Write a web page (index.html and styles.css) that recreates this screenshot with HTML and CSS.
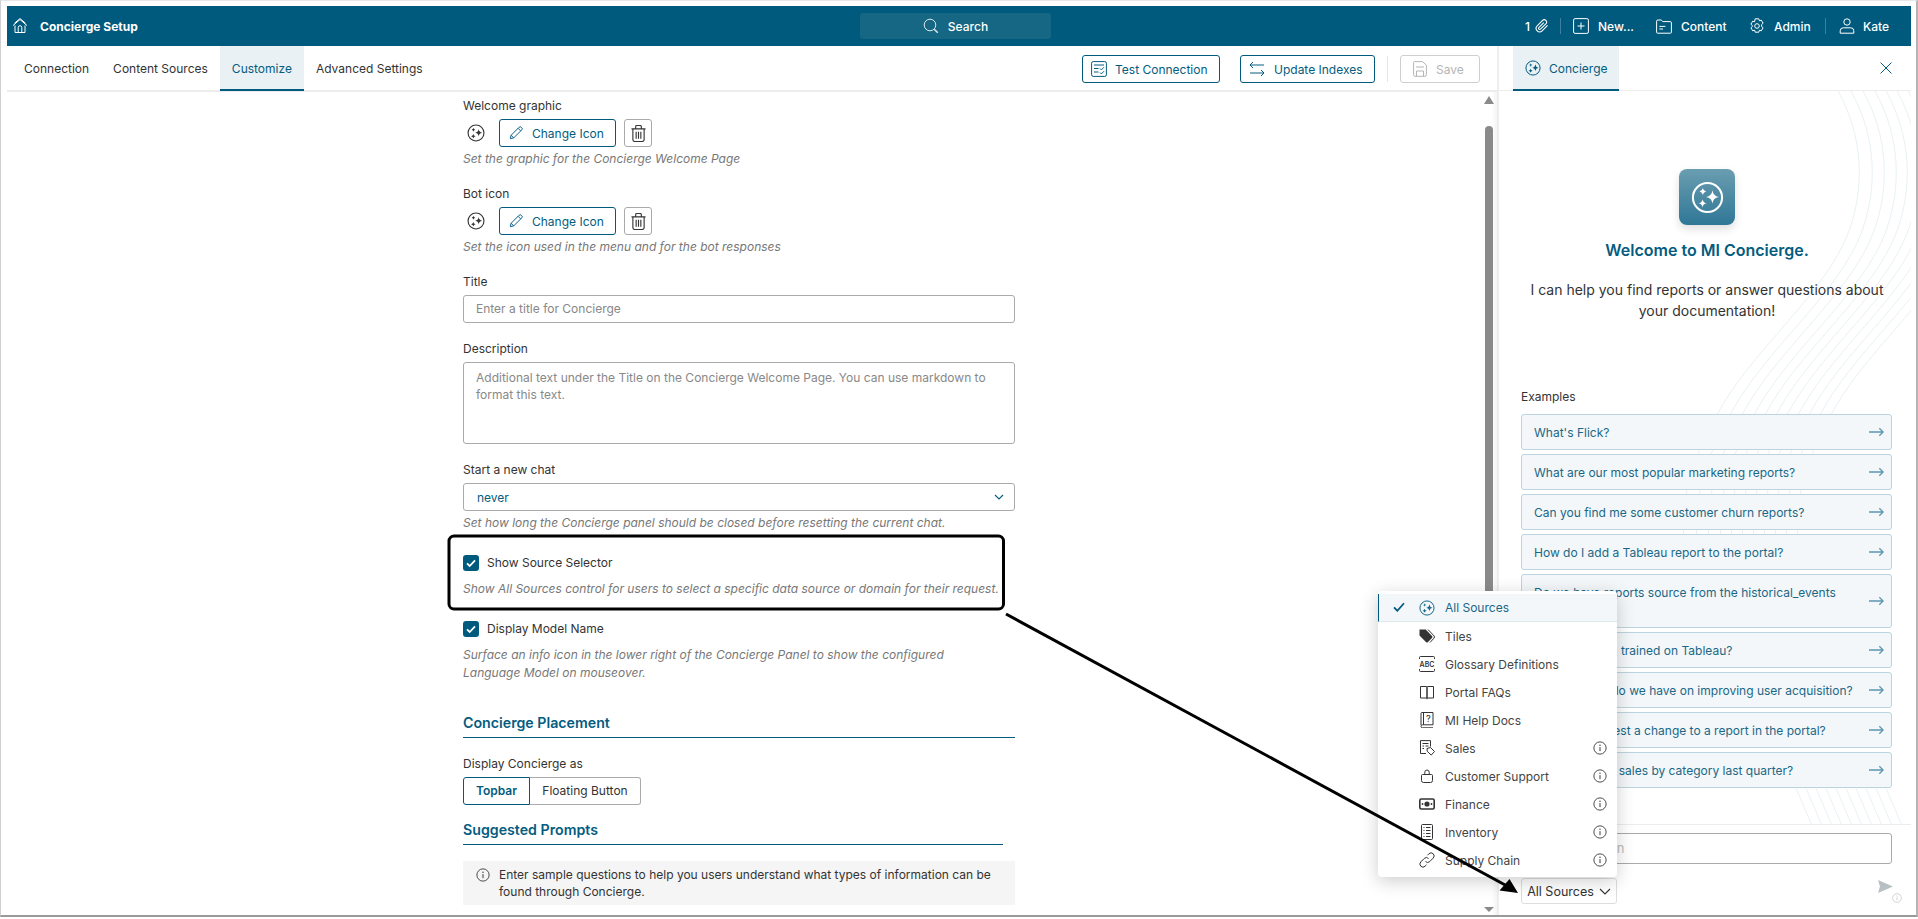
FILE: index.html
```html
<!DOCTYPE html>
<html lang="en">
<head>
<meta charset="utf-8">
<title>Concierge Setup</title>
<link rel="stylesheet" href="styles.css">
</head>
<body>
<svg class="defs" width="0" height="0" aria-hidden="true">
  <symbol id="spark" viewBox="0 0 24 24">
    <circle cx="12" cy="12" r="10.6" fill="none" stroke="currentColor" stroke-width="1.5"/>
    <path fill="currentColor" d="M15.6 6.800Q16.1 11 20.200 11.600 16.1 12.200 15.600 16.400 15.100 12.200 11 11.600 15.100 11 15.600 6.800Z"/>
    <path fill="currentColor" d="M8.600 5Q8.900 7.200 11 7.600 8.900 8 8.600 10.200 8.300 8 6.200 7.600 8.300 7.200 8.600 5Z"/>
    <path fill="currentColor" d="M8.400 13.200Q8.800 15.800 11.400 16.200 8.800 16.600 8.400 19.200 8 16.600 5.400 16.200 8 15.800 8.400 13.200Z"/>
  </symbol>
  <symbol id="info" viewBox="0 0 16 16">
    <circle cx="8" cy="8" r="7" fill="none" stroke="currentColor" stroke-width="1"/>
    <path d="M8 7v4.600" stroke="currentColor" stroke-width="1.100" fill="none"/>
    <circle cx="8" cy="4.800" r=".8" fill="currentColor"/>
  </symbol>
  <symbol id="pencil" viewBox="0 0 16 16">
    <path fill="none" stroke="currentColor" stroke-width="1.100" stroke-linejoin="round" d="M1.500 14.500l.9-3.900L11.600 1.400a1.600 1.600 0 0 1 2.300 0l.7.700a1.600 1.600 0 0 1 0 2.300L5.400 13.600z M2.400 10.600l3 3 M10.400 2.600l3 3"/>
  </symbol>
  <symbol id="trash" viewBox="0 0 16 18">
    <path fill="none" stroke="currentColor" stroke-width="1.200" d="M.5 4h15 M5 4V1.500a1 1 0 0 1 1-1h4a1 1 0 0 1 1 1V4 M2 4v11.500a2 2 0 0 0 2 2h8a2 2 0 0 0 2-2V4 M5.500 7v7.500 M8 7v7.500 M10.500 7v7.500"/>
  </symbol>
  <symbol id="arrow" viewBox="0 0 16 10">
    <path fill="none" stroke="currentColor" stroke-width="1.400" d="M0 5h15 M11 1l4 4-4 4"/>
  </symbol>
</svg>

<div class="window">
  <header class="topbar">
    <div class="brand">
      <svg class="ico16" viewBox="0 0 16 16"><path fill="none" stroke="currentColor" stroke-width="1" d="M1 7.500L8 1.500l7 6 M2.500 5.200L8 .6l5.500 4.600 M3 7.500v7h10v-7 M6.200 14.500V9.500a1.800 1.800 0 0 1 3.600 0v5"/></svg>
      <span>Concierge Setup</span>
    </div>
    <div class="search">
      <svg class="ico16" viewBox="0 0 16 16"><circle cx="7" cy="7" r="5.800" fill="none" stroke="currentColor" stroke-width="1"/><path d="M11.200 11.200l3.600 3.600" stroke="currentColor" stroke-width="1.600"/></svg>
      <span>Search</span>
    </div>
    <nav class="topnav">
      <span class="count">1</span>
      <svg class="ico14 clip" viewBox="0 0 24 24"><path fill="none" stroke="currentColor" stroke-width="1.800" d="M21.440 11.050l-9.190 9.190a6 6 0 0 1-8.490-8.490l9.190-9.190a4 4 0 0 1 5.660 5.660l-9.200 9.190a2 2 0 0 1-2.830-2.830l8.490-8.480"/></svg>
      <i class="sep first"></i>
      <svg class="ico16 plus" viewBox="0 0 16 16"><rect x=".6" y=".6" width="14.800" height="14.800" rx="1.500" fill="none" stroke="currentColor"/><path d="M8 4.500v7 M4.500 8h7" stroke="currentColor"/></svg>
      <span class="nav-new">New...</span>
      <svg class="ico16 folder" viewBox="0 0 16 16"><path fill="none" stroke="currentColor" d="M.6 14.400V3.200a1.200 1.200 0 0 1 1.200-1.200h3.400l1.600 1.600h7.400a1.200 1.200 0 0 1 1.200 1.200v9.600a.8.800 0 0 1-.8.800H1.400a.8.800 0 0 1-.8-.8z M3.400 8.400h6 M3.400 11h3.600"/></svg>
      <span class="nav-content">Content</span>
      <svg class="ico16 gear" viewBox="0 0 16 16"><path fill="none" stroke="currentColor" d="M6.200.8h3.600l.6 2 1.900-.6 1.800 3-1.500 1.400v1.800l1.500 1.400-1.800 3-1.900-.6-.6 2H6.200l-.6-2-1.900.6-1.800-3 1.500-1.400V7.600L1.900 6.200l1.800-3 1.900.6z"/><circle cx="8" cy="8" r="2.300" fill="none" stroke="currentColor"/></svg>
      <span class="nav-admin">Admin</span>
      <i class="sep second"></i>
      <svg class="ico16 user" viewBox="0 0 16 16"><circle cx="8" cy="4" r="3.200" fill="none" stroke="currentColor"/><path fill="none" stroke="currentColor" d="M1.200 15.200v-2.400a3 3 0 0 1 3-3h7.600a3 3 0 0 1 3 3v2.400z"/></svg>
      <span class="nav-kate">Kate</span>
    </nav>
  </header>

  <div class="workspace">
    <main class="main">
      <div class="tabbar">
        <a class="tab">Connection</a>
        <a class="tab">Content Sources</a>
        <a class="tab active">Customize</a>
        <a class="tab">Advanced Settings</a>
        <div class="actions">
          <button class="btn btn-test">
            <svg class="ico16" viewBox="0 0 16 16"><rect x=".6" y=".6" width="14.800" height="14.800" rx="1.600" fill="none" stroke="currentColor"/><path fill="none" stroke="currentColor" d="M3 4h10 M3 7.500h4.500 M3 11h4.500 M9 7.500l1.400 1.400L13 6.200 M9 11.500l1.400 1.400L13 10.200"/></svg>
            Test Connection
          </button>
          <button class="btn btn-update">
            <svg class="ico16" viewBox="0 0 16 16"><path fill="none" stroke="currentColor" d="M4 1L1 4l3 3 M1 4h14 M12 9l3 3-3 3 M15 12H1"/></svg>
            Update Indexes
          </button>
          <i class="action-sep"></i>
          <button class="btn btn-save">
            <svg class="ico14" viewBox="0 0 14 16"><path fill="none" stroke="currentColor" d="M1.500.6h8l3.900 3.600v9.600a1.500 1.500 0 0 1-1.500 1.500H2A1.500 1.500 0 0 1 .6 13.800V1.500A.9.900 0 0 1 1.500.6z M3 6h8 M3.500 15v-5h7v5"/></svg>
            Save
          </button>
        </div>
      </div>

      <div class="scroller">
        <form class="form">
          <div class="label">Welcome graphic</div>
          <div class="icon-row">
            <svg class="sample" viewBox="0 0 24 24"><use href="#spark"/></svg>
            <span class="btn btn-icon"><svg class="ico14" viewBox="0 0 16 16"><use href="#pencil"/></svg>Change Icon</span>
            <span class="btn-trash"><svg class="trash-ico" viewBox="0 0 16 18"><use href="#trash"/></svg></span>
          </div>
          <div class="hint">Set the graphic for the Concierge Welcome Page</div>

          <div class="label gap">Bot icon</div>
          <div class="icon-row">
            <svg class="sample" viewBox="0 0 24 24"><use href="#spark"/></svg>
            <span class="btn btn-icon"><svg class="ico14" viewBox="0 0 16 16"><use href="#pencil"/></svg>Change Icon</span>
            <span class="btn-trash"><svg class="trash-ico" viewBox="0 0 16 18"><use href="#trash"/></svg></span>
          </div>
          <div class="hint">Set the icon used in the menu and for the bot responses</div>

          <div class="label gap">Title</div>
          <div class="input placeholder">Enter a title for Concierge</div>

          <div class="label gap">Description</div>
          <div class="textarea placeholder">Additional text under the Title on the Concierge Welcome Page. You can use markdown to format this text.</div>

          <div class="label gap">Start a new chat</div>
          <div class="select">
            <span>never</span>
            <svg class="chev" viewBox="0 0 10 6"><path fill="none" stroke="currentColor" stroke-width="1.100" d="M1 1l4 4 4-4"/></svg>
          </div>
          <div class="hint">Set how long the Concierge panel should be closed before resetting the current chat.</div>

          <label class="check gap-lg"><span class="box"><svg viewBox="0 0 16 16"><path fill="none" stroke="#fff" stroke-width="1.800" d="M4 8.400l2.700 2.600L12 5.400"/></svg></span>Show Source Selector</label>
          <div class="hint hint-check">Show All Sources control for users to select a specific data source or domain for their request.</div>

          <label class="check gap-lg"><span class="box"><svg viewBox="0 0 16 16"><path fill="none" stroke="#fff" stroke-width="1.800" d="M4 8.400l2.700 2.600L12 5.400"/></svg></span>Display Model Name</label>
          <div class="hint hint-check">Surface an info icon in the lower right of the Concierge Panel to show the configured<br>Language Model on mouseover.</div>

          <h3 class="section placement">Concierge Placement</h3>
          <div class="label gap">Display Concierge as</div>
          <div class="toggle"><span class="seg on">Topbar</span><span class="seg">Floating Button</span></div>

          <h3 class="section prompts-head">Suggested Prompts</h3>
          <div class="notice">
            <svg class="notice-ico" viewBox="0 0 16 16"><use href="#info"/></svg>
            <span>Enter sample questions to help you users understand what types of information can be found through Concierge.</span>
          </div>
        </form>
        <div class="scrollbar">
          <i class="tri up"></i>
          <i class="thumb"></i>
          <i class="tri down"></i>
        </div>
      </div>
    </main>

    <aside class="panel">
      <svg class="arcs" viewBox="0 0 414 734" width="414" height="734" aria-hidden="true">
        <defs>
          <path id="arc1" d="M341 0C366 45 368 95 352 140 330 200 260 255 225 315 190 375 180 420 190 470"/>
          <path id="arc2" d="M296 690L330 770"/>
        </defs>
        <g fill="none" stroke="#e9f1f4" stroke-width="1">
          <use href="#arc1"/><use href="#arc1" x="13" /><use href="#arc1" x="25"/><use href="#arc1" x="37"/><use href="#arc1" x="48"/><use href="#arc1" x="59"/><use href="#arc1" x="70"/><use href="#arc1" x="81"/><use href="#arc1" x="92"/><use href="#arc1" x="103"/><use href="#arc1" x="114"/>
          <use href="#arc2"/><use href="#arc2" x="10"/><use href="#arc2" x="20"/><use href="#arc2" x="30"/><use href="#arc2" x="40"/><use href="#arc2" x="50"/><use href="#arc2" x="60"/><use href="#arc2" x="70"/><use href="#arc2" x="80"/><use href="#arc2" x="90"/>
        </g>
      </svg>
      <div class="panel-tabs">
        <a class="panel-tab"><svg class="ico16" viewBox="0 0 24 24"><use href="#spark"/></svg>Concierge</a>
        <svg class="close" viewBox="0 0 12 12"><path fill="none" stroke="currentColor" d="M.5.5l11 11 M11.500.5l-11 11"/></svg>
      </div>
      <div class="panel-body">
        <div class="logo"><svg viewBox="0 0 24 24"><use href="#spark"/></svg></div>
        <h2 class="welcome">Welcome to MI Concierge.</h2>
        <p class="intro">I can help you find reports or answer questions about your documentation!</p>
        <div class="examples">Examples</div>
        <ul class="prompts">
          <li class="prompt"><span>What's Flick?</span><svg class="parrow" viewBox="0 0 16 10"><use href="#arrow"/></svg></li>
          <li class="prompt"><span>What are our most popular marketing reports?</span><svg class="parrow" viewBox="0 0 16 10"><use href="#arrow"/></svg></li>
          <li class="prompt"><span>Can you find me some customer churn reports?</span><svg class="parrow" viewBox="0 0 16 10"><use href="#arrow"/></svg></li>
          <li class="prompt"><span>How do I add a Tableau report to the portal?</span><svg class="parrow" viewBox="0 0 16 10"><use href="#arrow"/></svg></li>
          <li class="prompt tall"><span>Do we have reports source from the historical_events table?</span><svg class="parrow" viewBox="0 0 16 10"><use href="#arrow"/></svg></li>
          <li class="prompt"><span>Has Flick been trained on Tableau?</span><svg class="parrow" viewBox="0 0 16 10"><use href="#arrow"/></svg></li>
          <li class="prompt"><span>What studies do we have on improving user acquisition?</span><svg class="parrow" viewBox="0 0 16 10"><use href="#arrow"/></svg></li>
          <li class="prompt"><span>How do I request a change to a report in the portal?</span><svg class="parrow" viewBox="0 0 16 10"><use href="#arrow"/></svg></li>
          <li class="prompt"><span>What were my sales by category last quarter?</span><svg class="parrow" viewBox="0 0 16 10"><use href="#arrow"/></svg></li>
        </ul>
      </div>
      <div class="composer">
        <div class="ask">Ask a question</div>
        <div class="composer-row">
          <div class="source-wrap">
            <ul class="menu">
              <li class="mi selected"><svg class="tick" viewBox="0 0 14 12"><path fill="none" stroke="currentColor" stroke-width="2.200" d="M1 6.500l4 4L13 1.500"/></svg><svg class="mi-ico" viewBox="0 0 24 24"><use href="#spark"/></svg><span>All Sources</span></li>
              <li class="mi"><svg class="mi-ico" viewBox="0 0 16 16"><path fill="currentColor" d="M.5 1.500h6.200L13 8a1.400 1.400 0 0 1 0 2l-4 4a1.400 1.400 0 0 1-2 0L.5 7.600z"/><path fill="none" stroke="currentColor" d="M9 1.500l6 6.400a1.600 1.600 0 0 1 0 2.200l-4 4.400"/></svg><span>Tiles</span></li>
              <li class="mi"><svg class="mi-ico" viewBox="0 0 16 16"><path fill="none" stroke="currentColor" d="M.5 3V1.500a1 1 0 0 1 1-1h13a1 1 0 0 1 1 1V3 M.5 13v1.500a1 1 0 0 0 1 1h13a1 1 0 0 0 1-1V13"/><text x="8" y="10.800" class="abc" text-anchor="middle">ABC</text></svg><span>Glossary Definitions</span></li>
              <li class="mi"><svg class="mi-ico" viewBox="0 0 16 16"><path fill="none" stroke="currentColor" d="M1.500 2.500H7.200a.8.800 0 0 1 .8.800V14H1.500z M14.500 2.500H8.800a.8.800 0 0 0-.8.800V14h6.500z M8 14v1.200"/></svg><span>Portal FAQs</span></li>
              <li class="mi"><svg class="mi-ico" viewBox="0 0 16 16"><path fill="none" stroke="currentColor" d="M2 13V1.500a1 1 0 0 1 1-1h11v12.300H3.500a1.500 1.500 0 0 0 0 3H14 M4.500.5v12.300"/><text x="9.300" y="9.800" class="qm" text-anchor="middle">?</text></svg><span>MI Help Docs</span></li>
              <li class="mi"><svg class="mi-ico" viewBox="0 0 16 16"><path fill="none" stroke="currentColor" d="M7 13.500H1.500V.6h10v6 M3.500 3.500h6 M3.500 6h1.500 M6.500 6h3 M3.500 8.500h1.500 M8 8.500l3.500-1 4 4-3.300 3.600-4-3.800z"/></svg><span>Sales</span><svg class="mi-info" viewBox="0 0 16 16"><use href="#info"/></svg></li>
              <li class="mi"><svg class="mi-ico" viewBox="0 0 16 16"><path fill="none" stroke="currentColor" d="M3.500 6.500h9a1 1 0 0 1 1 1v5a2 2 0 0 1-2 2h-7a2 2 0 0 1-2-2v-5a1 1 0 0 1 1-1z M5.800 6.500V4.200a2.200 2.200 0 0 1 4.400 0v2.300"/></svg><span>Customer Support</span><svg class="mi-info" viewBox="0 0 16 16"><use href="#info"/></svg></li>
              <li class="mi"><svg class="mi-ico" viewBox="0 0 16 16"><rect x=".8" y="3" width="14.400" height="10" rx="1.500" fill="none" stroke="currentColor" stroke-width="1.600"/><circle cx="8" cy="8" r="2.600" fill="currentColor"/><circle cx="3.500" cy="8" r=".9" fill="currentColor"/><circle cx="12.500" cy="8" r=".9" fill="currentColor"/></svg><span>Finance</span><svg class="mi-info" viewBox="0 0 16 16"><use href="#info"/></svg></li>
              <li class="mi"><svg class="mi-ico" viewBox="0 0 16 16"><rect x="2.500" y=".5" width="11" height="15" rx="1" fill="none" stroke="currentColor"/><path fill="none" stroke="currentColor" d="M4.500 3.500h1 M7 3.500h4.500 M4.500 6.500h1 M7 6.500h4.500 M4.500 9.500h1 M7 9.500h4.500 M4.500 12.500h1 M7 12.500h4.500"/></svg><span>Inventory</span><svg class="mi-info" viewBox="0 0 16 16"><use href="#info"/></svg></li>
              <li class="mi"><svg class="mi-ico" viewBox="0 0 16 16"><path fill="none" stroke="currentColor" d="M6.500 9.500a3 3 0 0 0 4.300 0l3.400-3.400a3 3 0 0 0-4.300-4.300L8.500 3.200 M9.500 6.500a3 3 0 0 0-4.300 0L1.800 9.900a3 3 0 0 0 4.300 4.300l1.400-1.400"/></svg><span>Supply Chain</span><svg class="mi-info" viewBox="0 0 16 16"><use href="#info"/></svg></li>
            </ul>
            <div class="source-btn">All Sources<svg class="source-chev" viewBox="0 0 12 7"><path fill="none" stroke="currentColor" stroke-width="1.100" d="M1 1l5 5 5-5"/></svg></div>
          </div>
          <div class="send">
            <svg class="send-ico" viewBox="0 0 16 14"><path fill="#b9c0c4" d="M0 0l16 7-16 7 2-7z"/></svg>
            <svg class="send-info" viewBox="0 0 16 16"><use href="#info"/></svg>
          </div>
        </div>
      </div>
    </aside>
  </div>
</div>

<svg class="annotation" viewBox="0 0 1918 919" width="1918" height="919" aria-hidden="true">
  <rect x="449" y="536" width="554.500" height="73" rx="5" fill="none" stroke="#000" stroke-width="3"/>
  <path d="M1006 614L1507 886" fill="none" stroke="#000" stroke-width="3"/>
  <path d="M1518 893L1499.500 890.500 1509.500 879z" fill="#000"/>
</svg>
</body>
</html>
```
FILE: styles.css
```css
* { box-sizing: border-box; }
html, body { margin: 0; height: 919px; overflow: hidden; }
body {
  position: relative;
  background: #fff;
  font-family: Inter, "Liberation Sans", Arial, sans-serif;
  font-size: 12px;
  color: #333;
}
.defs { position: absolute; }
.abc { font: 600 7px Inter, "Liberation Sans", sans-serif; fill: currentColor; }
.qm { font: 500 9px Inter, "Liberation Sans", sans-serif; fill: currentColor; }

.window {
  height: 917px;
  padding: 5px 5px 0 6px;
  border-top: 1px solid #e6e6e6;
  border-left: 1px solid #d0d0d0;
  border-right: 2px solid #b5b5b5;
  border-bottom: 2px solid #9a9a9a;
  display: flex;
  flex-direction: column;
  overflow: hidden;
}
.ico16 { width: 16px; height: 16px; flex: none; }
.ico14 { width: 14px; height: 16px; flex: none; }

/* top bar */
.topbar {
  height: 40px;
  flex: none;
  background: #005a7d;
  color: #fff;
  display: flex;
  align-items: center;
  font-weight: 500;
  font-size: 12px;
}
.brand { width: 853px; display: flex; align-items: center; gap: 12px; padding-left: 5px; font-weight: 700; }
.search {
  width: 191px;
  height: 26px;
  background: #166783;
  border-radius: 3px;
  display: flex;
  align-items: center;
  justify-content: center;
  gap: 9px;
  font-weight: 500;
  color: #fff;
}
.search svg { color: #d9e6ec; }
.topnav { flex: 1; display: flex; align-items: center; padding-left: 474px; }
.count { width: 10px; }
.sep { width: 1px; height: 16px; background: #3f7f99; flex: none; }
.sep.first { margin-left: 11px; }
.plus { margin-left: 12px; }
.nav-new { margin-left: 9px; width: 34px; white-space: nowrap; }
.folder { margin-left: 24px; }
.nav-content { margin-left: 9px; width: 44px; }
.gear { margin-left: 24px; }
.nav-admin { margin-left: 9px; width: 35px; }
.sep.second { margin-left: 16px; }
.user { margin-left: 13px; }
.nav-kate { margin-left: 8px; }

/* workspace */
.workspace { flex: 1; min-height: 0; display: flex; }
.main { width: 1490px; flex: none; display: flex; flex-direction: column; }
.tabbar {
  height: 46px;
  flex: none;
  display: flex;
  align-items: stretch;
  padding-left: 5px;
  border-bottom: 2px solid #ececec;
}
.tab {
  padding: 0 12px;
  margin-bottom: -1px;
  line-height: 45px;
  color: #333;
  white-space: nowrap;
}
.tab.active { background: #e9f1f5; color: #045c80; border-bottom: 2px solid #005a7d; }
.actions { margin-left: auto; display: flex; align-items: center; padding: 2px 17px 0 0; }
.btn {
  height: 28px;
  display: inline-flex;
  align-items: center;
  border: 1px solid #005a7d;
  border-radius: 3px;
  background: #fff;
  color: #045c80;
  font: inherit;
  white-space: nowrap;
}
.btn-test { width: 138px; padding-left: 8px; gap: 8px; }
.btn-update { width: 135px; margin-left: 20px; padding-left: 8px; gap: 9px; }
.action-sep { width: 1px; height: 26px; background: #e6e6e6; margin: 0 12px; }
.btn-save { width: 80px; border-color: #cfcfcf; color: #b5b5b5; padding-left: 12px; gap: 9px; }

.scroller { flex: 1; min-height: 0; display: flex; overflow: hidden; }
.form { flex: 1; padding: 5px 0 0 456px; overflow: hidden; }
.form > * { width: 552px; }
.label { line-height: 18px; color: #333; }
.gap { margin-top: 17px; }
.icon-row { display: flex; align-items: center; height: 28px; margin-top: 4px; }
.sample { width: 18px; height: 18px; margin-left: 4px; color: #333; flex: none; }
.btn-icon { width: 117px; margin-left: 14px; padding-left: 9px; gap: 9px; }
.btn-trash {
  width: 28px; height: 28px; margin-left: 8px;
  border: 1px solid #aaa; border-radius: 3px;
  display: flex; align-items: center; justify-content: center;
  color: #333;
}
.trash-ico { width: 15px; height: 17px; }
.hint { margin-top: 3px; line-height: 18px; font-size: 12px; font-style: italic; color: #777; }
.input, .select, .textarea {
  border: 1px solid #aaa;
  border-radius: 3px;
  margin-top: 4px;
}
.input { height: 28px; line-height: 26px; padding: 0 12px; }
.textarea { height: 82px; padding: 6px 12px; line-height: 17px; }
.placeholder { color: #888; }
.select { height: 28px; padding: 0 10px 0 13px; display: flex; align-items: center; justify-content: space-between; color: #045c80; }
.chev { width: 10px; height: 6px; color: #045c80; }
.check { display: flex; align-items: center; gap: 8px; line-height: 18px; color: #333; }
.gap-lg { margin-top: 22px; }
.box { width: 16px; height: 16px; background: #005a7d; border-radius: 3px; flex: none; display: flex; }
.box svg { width: 16px; height: 16px; }
.hint-check { margin-top: 8px; }
.section {
  margin: 0;
  font-size: 14.200px;
  font-weight: 600;
  line-height: 20px;
  color: #045c80;
  padding-bottom: 4px;
  border-bottom: 1px solid #005a7d;
}
.placement { margin-top: 31px; }
.prompts-head { margin-top: 15px; width: 540px; }
.toggle { display: flex; width: auto; margin-top: 4px; height: 28px; }
.seg {
  border: 1px solid #aaa;
  border-left: 0;
  border-radius: 0 3px 3px 0;
  width: 111px;
  text-align: center;
  line-height: 26px;
  color: #333;
}
.seg.on {
  width: 67px;
  border: 1px solid #005a7d;
  border-radius: 3px 0 0 3px;
  color: #045c80;
  font-weight: 600;
}
.notice {
  margin-top: 16px;
  height: 44px;
  background: #f5f5f5;
  padding: 5px 20px 0 36px;
  line-height: 17px;
  position: relative;
  color: #333;
}
.notice-ico { position: absolute; left: 13px; top: 7px; width: 14px; height: 14px; color: #333; }

.scrollbar {
  width: 13px;
  flex: none;
  display: flex;
  flex-direction: column;
  align-items: center;
  padding: 4px 3px 3px 0;
  background: linear-gradient(to right, #fff 60%, #f4f4f4);
}
.tri { width: 0; height: 0; border-left: 5px solid transparent; border-right: 5px solid transparent; flex: none; }
.tri.up { border-bottom: 8px solid #8a8a8a; }
.tri.down { border-top: 5px solid #8a8a8a; margin-top: auto; }
.thumb { width: 8px; height: 520px; margin-top: 22px; background: #8a8a8a; border-radius: 4px; flex: none; }

/* concierge panel */
.panel {
  flex: 1;
  min-width: 0;
  position: relative;
  border-left: 2px solid #eee;
  display: flex;
  flex-direction: column;
}
.arcs { position: absolute; left: -2px; top: 45px; }
.panel-tabs {
  height: 45px;
  flex: none;
  padding: 0 19px 0 14px;
  display: flex;
  align-items: center;
  justify-content: space-between;
  border-bottom: 1px solid #ececec;
  position: relative;
}
.panel-tab {
  height: 45px;
  width: 106px;
  background: #e9f1f5;
  border-bottom: 2px solid #005a7d;
  color: #045c80;
  display: flex;
  align-items: center;
  gap: 8px;
  padding: 2px 0 0 12px;
}
.close { width: 12px; height: 12px; color: #045c80; }
.panel-body {
  flex: 1;
  min-height: 0;
  padding: 78px 19px 0 22px;
  display: flex;
  flex-direction: column;
  align-items: center;
  position: relative;
}
.logo {
  width: 56px; height: 56px;
  margin-left: 1px;
  border-radius: 8px;
  background: linear-gradient(#6a9db1, #2f7796);
  box-shadow: 0 4px 8px rgba(0, 0, 0, .13);
  display: flex; align-items: center; justify-content: center;
  color: #fff;
  flex: none;
}
.logo svg { width: 33px; height: 33px; }
.welcome { margin: 14px 0 0 1px; font-size: 16px; line-height: 22px; font-weight: 600; color: #045c80; }
.intro { margin: 18px 0 0 1px; width: 366px; text-align: center; font-size: 14px; line-height: 21px; color: #333; }
.examples { align-self: flex-start; margin-top: 67px; line-height: 18px; color: #333; }
.prompts {
  list-style: none; margin: 8px 0 0; padding: 0;
  width: 100%;
  display: flex; flex-direction: column; gap: 4px;
}
.prompt {
  height: 36px;
  border: 1px solid #bcd4e0;
  border-radius: 3px;
  background: #f3f7f9;
  color: #1a6787;
  padding: 0 7px 0 12px;
  display: flex;
  align-items: center;
  justify-content: space-between;
  gap: 8px;
  line-height: 17px;
}
.prompt.tall { height: 54px; }
.parrow { width: 15px; height: 10px; flex: none; color: #5b98b3; }
.composer { flex: none; height: 91px; border-top: 1px solid #ececec; padding: 8px 19px 0 22px; position: relative; }
.ask {
  height: 31px;
  border: 1px solid #aaa;
  border-radius: 3px;
  padding: 0 12px;
  font-size: 13px;
  line-height: 29px;
  color: #bbb;
  background: #fff;
}
.composer-row { display: flex; justify-content: space-between; margin-top: 14px; }
.source-wrap { position: relative; }
.source-btn {
  width: 96px; height: 26px;
  border: 1px solid #ddd;
  border-radius: 3px;
  display: flex; align-items: center; justify-content: center; gap: 5px;
  color: #333;
  background: #fff;
  font-size: 12.500px;
}
.source-chev { width: 12px; height: 7px; }
.send { position: relative; width: 14px; }
.send-ico { position: absolute; left: 0; top: 2px; width: 15px; height: 13px; }
.send-info { position: absolute; left: 14px; top: 15px; width: 10px; height: 10px; color: #bbb; }
.menu {
  position: absolute;
  right: 0;
  bottom: calc(100% + 1px);
  width: 239px;
  margin: 0;
  padding: 3px 0;
  list-style: none;
  background: #fff;
  border-radius: 4px;
  box-shadow: 0 4px 18px rgba(0, 0, 0, .2);
  z-index: 5;
}
.mi {
  height: 28px;
  display: flex;
  align-items: center;
  padding-left: 41px;
  position: relative;
  color: #444;
}
.mi.selected {
  background: #f3f7f9;
  color: #1a6787;
  border-left: 1px solid #005a7d;
  border-bottom: 1px solid #dfe8ec;
  padding-left: 40px;
}
.tick { position: absolute; left: 14px; top: 8px; width: 12px; height: 10px; color: #045c80; }
.mi-ico { width: 16px; height: 16px; flex: none; color: #333; }
.selected .mi-ico { color: #1a6787; }
.mi span { margin-left: 10px; }
.mi-info { position: absolute; right: 10px; top: 7px; width: 14px; height: 14px; color: #333; }

.annotation { position: absolute; left: 0; top: 0; z-index: 10; pointer-events: none; }
```
